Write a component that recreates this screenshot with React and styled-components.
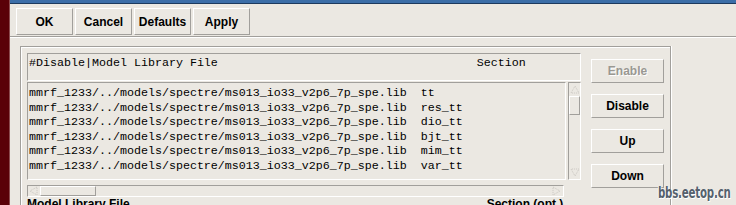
import React from "react"
import styled, {createGlobalStyle} from "styled-components"

const colors = {
    face: "#ebe8e2",
    shadow: "#a19f9b",
    light: "#ffffff",
    disabled: "#c9c6c0",
    title: "#3c6ea8",
    titleEdge: "#1d3a5e",
    strip: "#5a0008",
}

const mono = `"Liberation Mono", "DejaVu Sans Mono", monospace`
const sans = `"Liberation Sans", Arial, sans-serif`

const GlobalStyle = createGlobalStyle`
    html, body {
        margin: 0;
        padding: 0;
        background: ${colors.face};
        overflow: hidden;
    }
`

const rows = [
    ["mmrf_1233/../models/spectre/ms013_io33_v2p6_7p_spe.lib", "tt"],
    ["mmrf_1233/../models/spectre/ms013_io33_v2p6_7p_spe.lib", "res_tt"],
    ["mmrf_1233/../models/spectre/ms013_io33_v2p6_7p_spe.lib", "dio_tt"],
    ["mmrf_1233/../models/spectre/ms013_io33_v2p6_7p_spe.lib", "bjt_tt"],
    ["mmrf_1233/../models/spectre/ms013_io33_v2p6_7p_spe.lib", "mim_tt"],
    ["mmrf_1233/../models/spectre/ms013_io33_v2p6_7p_spe.lib", "var_tt"],
]

const Screen = styled.div`
    position: relative;
    display: flex;
    width: 736px;
    height: 205px;
    overflow: hidden;
    background: ${colors.face};
`

const Strip = styled.div`
    width: 9px;
    flex: none;
    background: ${colors.strip};
    border-right: 1px solid #8c4a4e;
`

const Window = styled.div`
    flex: 1;
    display: flex;
    flex-direction: column;
    min-width: 0;
`

const TitleEdge = styled.div`
    height: 3px;
    flex: none;
    background: ${colors.title};
    border-bottom: 1px solid ${colors.titleEdge};
`

const Toolbar = styled.div`
    display: flex;
    gap: 2px;
    padding: 4px 0 0 6px;
    height: 27px;
    flex: none;
`

const Button = styled.button`
    box-sizing: border-box;
    width: ${p => p.$w}px;
    height: ${p => p.$h}px;
    margin: 0;
    padding: 0;
    background: ${colors.face};
    border: 1px solid;
    border-color: ${colors.light} ${colors.shadow} ${colors.shadow} ${colors.light};
    font-family: ${sans};
    font-weight: bold;
    font-size: 12px;
    color: ${p => p.disabled ? "#9a9892" : "#000"};
    text-shadow: ${p => p.disabled ? `1px 1px 0 ${colors.light}` : "none"};
    cursor: default;
`

const Separator = styled.div`
    margin-top: 1px;
    height: 0;
    flex: none;
    border-top: 1px solid ${colors.shadow};
    border-bottom: 1px solid ${colors.light};
`

const Frame = styled.div`
    box-sizing: border-box;
    margin: 8px 0 0 10px;
    width: 651px;
    flex: 1;
    display: flex;
    padding: 6px 0 0 6px;
    border: 1px solid ${colors.shadow};
    border-bottom: none;
    box-shadow: inset 1px 1px 0 ${colors.light}, 1px 0 0 ${colors.light};
`

const ListColumn = styled.div`
    width: 554px;
    display: flex;
    flex-direction: column;
`

const Sunken = styled.div`
    box-sizing: border-box;
    flex: none;
    border: 1px solid;
    border-color: ${colors.shadow} ${colors.light} ${colors.light} ${colors.shadow};
`

const HeaderBox = styled(Sunken)`
    height: 28px;
    padding: 2px 0 0 1px;
    font-family: ${mono};
    font-size: 11.67px;
    line-height: 14px;
    white-space: pre;
    color: #000;
`

const ListArea = styled.div`
    display: flex;
    flex: none;
    gap: 2px;
    margin-top: 1px;
    height: 98px;
`

const ListBox = styled(Sunken)`
    width: 539px;
    padding: 3px 0 0 1px;
    font-family: ${mono};
    font-size: 11.67px;
    line-height: 14.6px;
    white-space: pre;
    color: #000;
    overflow: hidden;
`

const VScroll = styled(Sunken)`
    width: 13px;
    display: flex;
    flex-direction: column;
`

const Arrow = styled.div`
    box-sizing: border-box;
    flex: none;
    width: ${p => p.$w}px;
    height: ${p => p.$h}px;
    display: flex;
    align-items: center;
    justify-content: center;
`

const Thumb = styled.div`
    box-sizing: border-box;
    flex: none;
    width: ${p => p.$w}px;
    height: ${p => p.$h}px;
    border: 1px solid;
    border-color: ${colors.light} ${colors.shadow} ${colors.shadow} ${colors.light};
`

const Spacer = styled.div`
    flex: 1;
`

const HScroll = styled(Sunken)`
    margin-top: 5px;
    width: 537px;
    height: 12px;
    display: flex;
`

const Labels = styled.div`
    display: flex;
    flex: none;
    font-family: ${sans};
    font-weight: bold;
    font-size: 12px;
    line-height: 14px;
    white-space: pre;
`

const SectionLabel = styled.span`
    margin-left: 357px;
`

const ButtonColumn = styled.div`
    display: flex;
    flex-direction: column;
    gap: 11px;
    margin: 6px 0 0 10px;
`

const Watermark = styled.div`
    position: absolute;
    right: 5px;
    bottom: 4px;
    font-family: "DejaVu Sans", sans-serif;
    font-weight: bold;
    font-size: 16px;
    line-height: 16px;
    letter-spacing: -0.3px;
    transform: scaleX(0.64);
    transform-origin: right bottom;
    color: #56616d;
    text-shadow: 1px 1px 0 #fff, -1px 0 0 #fff;
`

const Tri = ({dir}) => {
    const pts = {
        up: "1,8 5,1 9,8",
        down: "1,1 5,8 9,1",
        left: "8,1 1,5 8,9",
        right: "1,1 8,5 1,9",
    }[dir]
    return (
        <svg width="10" height="10" viewBox="0 0 10 10">
            <polygon points={pts} fill="none" stroke={colors.disabled} strokeWidth="1" strokeDasharray="1 1" />
        </svg>
    )
}

const App = () => (
    <Screen>
        <GlobalStyle />
        <Strip />
        <Window>
            <TitleEdge />
            <Toolbar>
                <Button $w={57} $h={27}>OK</Button>
                <Button $w={57} $h={27}>Cancel</Button>
                <Button $w={57} $h={27}>Defaults</Button>
                <Button $w={57} $h={27}>Apply</Button>
            </Toolbar>
            <Separator />
            <Frame>
                <ListColumn>
                    <HeaderBox>{"#Disable|Model Library File" + " ".repeat(37) + "Section"}</HeaderBox>
                    <ListArea>
                        <ListBox>
                            {rows.map(([file, section], i) => (
                                <div key={i}>{file + "  " + section}</div>
                            ))}
                        </ListBox>
                        <VScroll>
                            <Arrow $w={11} $h={13}><Tri dir="up" /></Arrow>
                            <Thumb $w={11} $h={19} />
                            <Spacer />
                            <Arrow $w={11} $h={13}><Tri dir="down" /></Arrow>
                        </VScroll>
                    </ListArea>
                    <HScroll>
                        <Arrow $w={12} $h={10}><Tri dir="left" /></Arrow>
                        <Thumb $w={56} $h={10} />
                        <Spacer />
                        <Arrow $w={12} $h={10}><Tri dir="right" /></Arrow>
                    </HScroll>
                    <Labels>
                        <span>Model Library File</span>
                        <SectionLabel>Section (opt.)</SectionLabel>
                    </Labels>
                </ListColumn>
                <ButtonColumn>
                    <Button $w={73} $h={24} disabled>Enable</Button>
                    <Button $w={73} $h={24}>Disable</Button>
                    <Button $w={73} $h={24}>Up</Button>
                    <Button $w={73} $h={24}>Down</Button>
                </ButtonColumn>
            </Frame>
        </Window>
        <Watermark>bbs.eetop.cn</Watermark>
    </Screen>
)

export default App
